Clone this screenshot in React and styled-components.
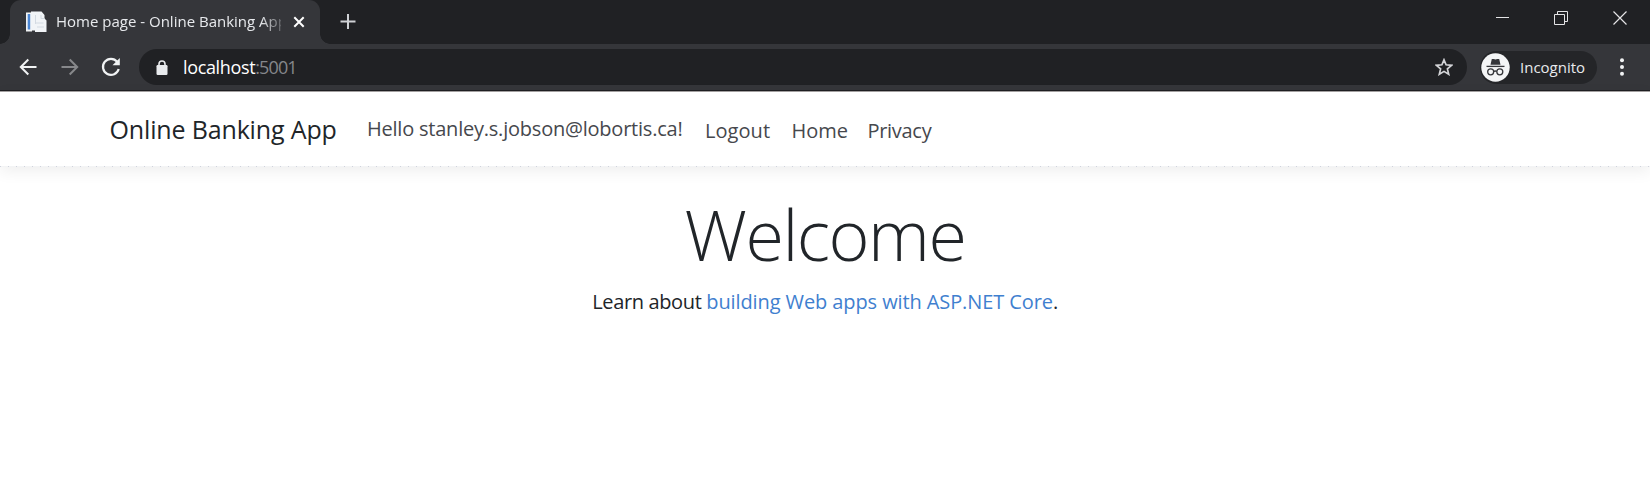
import React from "react";
import styled, { createGlobalStyle } from "styled-components";

const Global = createGlobalStyle`
  * { box-sizing: border-box; }
  html, body { margin: 0; background: #fff; }
  body { font-family: "Open Sans", "Noto Sans", sans-serif; color: #212529; }
`;

const Browser = styled.div`
  display: flex;
  flex-direction: column;
  height: 494px;
  overflow: hidden;
`;

const TabStrip = styled.div`
  display: flex;
  height: 44px;
  flex: none;
  background: #202124;
  padding-left: 10px;
  color: #e8eaed;
`;

const Tab = styled.div`
  position: relative;
  display: flex;
  align-items: center;
  width: 310px;
  padding: 0 15px 1px 15px;
  background: #35363a;
  border-radius: 11px 11px 0 0;
  &::before, &::after {
    content: "";
    position: absolute;
    bottom: 0;
    width: 10px;
    height: 10px;
  }
  &::before { left: -10px; background: radial-gradient(circle at 0 0, transparent 9.5px, #35363a 10px); }
  &::after { right: -10px; background: radial-gradient(circle at 100% 0, transparent 9.5px, #35363a 10px); }
`;

const TabTitle = styled.span`
  flex: none;
  width: 225px;
  margin-left: 9px;
  margin-right: 1px;
  padding-bottom: 2px;
  overflow: hidden;
  white-space: nowrap;
  font-size: 15px;
  line-height: 24px;
  mask-image: linear-gradient(to right, #000 205px, rgba(0, 0, 0, 0.25) 225px);
`;

const Glyph = styled.svg`
  display: block;
  flex: none;
  fill: none;
  margin-left: ${(p) => p.$ml || 0}px;
`;

const WindowControls = styled.div`
  display: flex;
  align-items: center;
  height: 36px;
  gap: 45px;
  margin-left: auto;
  padding-right: 23px;
`;

const Toolbar = styled.div`
  display: flex;
  align-items: center;
  height: 47px;
  flex: none;
  background: #35363a;
  border-bottom: 1px solid #1f1f22;
  color: #e8eaed;
  padding: 0 0 0 19px;
`;

const AddressBar = styled.div`
  display: flex;
  align-items: center;
  width: 1328px;
  height: 36px;
  margin-left: 18px;
  padding: 0 14px 0 17px;
  border-radius: 18px;
  background: #202124;
`;

const Url = styled.span`
  flex: 1;
  margin-left: 15px;
  font-size: 18px;
  line-height: 24px;
  letter-spacing: -0.35px;
  color: #fff;
`;

const Port = styled.span`
  color: #85878b;
  letter-spacing: -0.9px;
`;

const Profile = styled.div`
  display: flex;
  align-items: center;
  width: 117px;
  height: 33px;
  margin-left: 13px;
  padding-left: 1px;
  border-radius: 17px;
  background: #242528;
`;

const ProfileName = styled.span`
  margin-left: 10px;
  font-size: 15px;
  line-height: 24px;
`;

const Navbar = styled.header`
  display: flex;
  align-items: center;
  height: 75px;
  flex: none;
  padding: 0 0 0 109.5px;
  border-top: 1px solid #a3a0a0;
  background: #fff;
  box-shadow: 0 5px 15px rgba(0, 0, 0, 0.07);
  white-space: nowrap;
`;

const Brand = styled.a`
  width: 257.5px;
  font-size: 25px;
  line-height: 36px;
  letter-spacing: -0.15px;
`;

const NavText = styled.span`
  width: ${(p) => p.$w}px;
  font-size: 20px;
  line-height: 30px;
  letter-spacing: ${(p) => p.$ls}px;
  padding-top: ${(p) => p.$drop || 0}px;
  color: #46484d;
`;

const BottomRule = styled.div`
  height: 1px;
  flex: none;
  background: repeating-linear-gradient(to right, #d0d3dd 0 1px, #f3f4f5 1px 8px);
`;

const Main = styled.main`
  text-align: center;
  padding-top: 25px;
`;

const Heading = styled.h1`
  margin: 0;
  font-size: 70px;
  line-height: 84px;
  font-weight: 300;
  letter-spacing: -1.5px;
`;

const Lead = styled.p`
  margin: 10px 0 0;
  font-size: 20px;
  line-height: 32px;
  letter-spacing: -0.36px;
`;

const Link = styled.a`
  color: #3f80cf;
  letter-spacing: -0.1px;
`;

const Favicon = () => (
  <Glyph width="22" height="22" viewBox="0 0 22 22">
    <path d="M1 1.500h6v19H1z" fill="#f1f3f4" />
    <path d="M2.700 3h2.500v15.500h-2.500z" fill="#4a86d4" />
    <path d="M6 .5h10.500l3 3.500v3.500l2 2V21H10v-1.500H6z" fill="#f1f4f7" />
    <path d="M10.500 4v9M10.500 12h8M16 4v3.500h3.500M12 16h7" stroke="#d3dae2" />
  </Glyph>
);

const Incognito = () => (
  <Glyph width="29" height="29" viewBox="0 0 29 29">
    <circle cx="14.500" cy="14.500" r="14.200" fill="#f4f5f6" />
    <path d="M10.800 6h2l1.700.6L16.200 6h2l1.300 5.800h-10z" fill="#35363a" />
    <path d="M5.500 13.400h18" stroke="#35363a" strokeWidth="1.300" />
    <g stroke="#35363a" strokeWidth="1.300">
      <circle cx="9.700" cy="18.800" r="3" />
      <circle cx="18.800" cy="18.800" r="3" />
      <path d="M12.700 18.600q1.500-1.200 3 0" />
    </g>
  </Glyph>
);

export default function App() {
  return (
    <>
      <Global />
      <Browser>
        <TabStrip>
          <Tab>
            <Favicon />
            <TabTitle>Home page - Online Banking App</TabTitle>
            <Glyph width="12" height="12" viewBox="0 0 12 12" $ml={11} stroke="#fff" strokeWidth="2">
              <path d="M1.300 1.300l9.400 9.400M10.700 1.300l-9.400 9.400" />
            </Glyph>
          </Tab>
          <Glyph width="16" height="43" viewBox="0 0 16 43" $ml={20} stroke="#cfd1d5" strokeWidth="2">
            <path d="M8 14v15M.5 21.500h15" />
          </Glyph>
          <WindowControls>
            <Glyph width="13" height="14" viewBox="0 0 13 14" stroke="#e4e4e6">
              <path d="M0 6.500h13" />
            </Glyph>
            <Glyph width="14" height="14" viewBox="0 0 14 14" stroke="#e4e4e6">
              <path d="M.5 3.500h10v10H.5zM3.500 3.500v-3h10v10h-3" />
            </Glyph>
            <Glyph width="14" height="14" viewBox="0 0 14 14" stroke="#e4e4e6" strokeWidth="1.200">
              <path d="M.5.5l13 13M13.500.5l-13 13" />
            </Glyph>
          </WindowControls>
        </TabStrip>
        <Toolbar>
          <Glyph width="18" height="18" viewBox="0 0 18 18" stroke="#f1f3f4" strokeWidth="2">
            <path d="M17.500 9H2M9.300 1.500L1.800 9l7.500 7.500" />
          </Glyph>
          <Glyph width="18" height="18" viewBox="0 0 18 18" $ml={24} stroke="#87888b" strokeWidth="2">
            <path d="M.5 9H16M8.700 1.500L16.200 9l-7.500 7.500" />
          </Glyph>
          <Glyph width="20" height="20" viewBox="0 0 20 20" $ml={22}>
            <path d="M16.200 4.800A8 8 0 1 0 17.700 12" stroke="#f1f3f4" strokeWidth="2.200" />
            <path d="M18.800 1v7.300h-7.300z" fill="#f1f3f4" />
          </Glyph>
          <AddressBar>
            <Glyph width="12" height="15" viewBox="0 0 12 15">
              <rect x=".5" y="5" width="11" height="10" rx="1.200" fill="#e8eaed" />
              <path d="M3 6V4a3 3 0 0 1 6 0v2" stroke="#e8eaed" strokeWidth="1.600" />
            </Glyph>
            <Url>localhost<Port>:5001</Port></Url>
            <Glyph width="18" height="18" viewBox="0 0 18 18" stroke="#d3d4d7" strokeWidth="1.700">
              <path d="M9 1.800l2.100 5 5.500.5-4.200 3.600 1.300 5.400L9 13.400l-4.700 2.900 1.300-5.400L1.400 7.300l5.500-.5z" />
            </Glyph>
          </AddressBar>
          <Profile>
            <Incognito />
            <ProfileName>Incognito</ProfileName>
          </Profile>
          <Glyph width="4" height="18" viewBox="0 0 4 18" $ml={22.5}>
            <g fill="#f1f3f4">
              <circle cx="2" cy="2.300" r="2" />
              <circle cx="2" cy="9" r="2" />
              <circle cx="2" cy="15.700" r="2" />
            </g>
          </Glyph>
        </Toolbar>
        <Navbar>
          <Brand>Online Banking App</Brand>
          <NavText $w={338} $ls={-0.22}>Hello stanley.s.jobson@lobortis.ca!</NavText>
          <NavText $w={86.500} $ls={0.05} $drop={4}>Logout</NavText>
          <NavText $w={76} $ls={0} $drop={4}>Home</NavText>
          <NavText $w={70} $ls={-0.3} $drop={4}>Privacy</NavText>
        </Navbar>
        <BottomRule />
        <Main>
          <Heading>Welcome</Heading>
          <Lead>
            Learn about <Link>building Web apps with ASP.NET Core</Link>.
          </Lead>
        </Main>
      </Browser>
    </>
  );
}
